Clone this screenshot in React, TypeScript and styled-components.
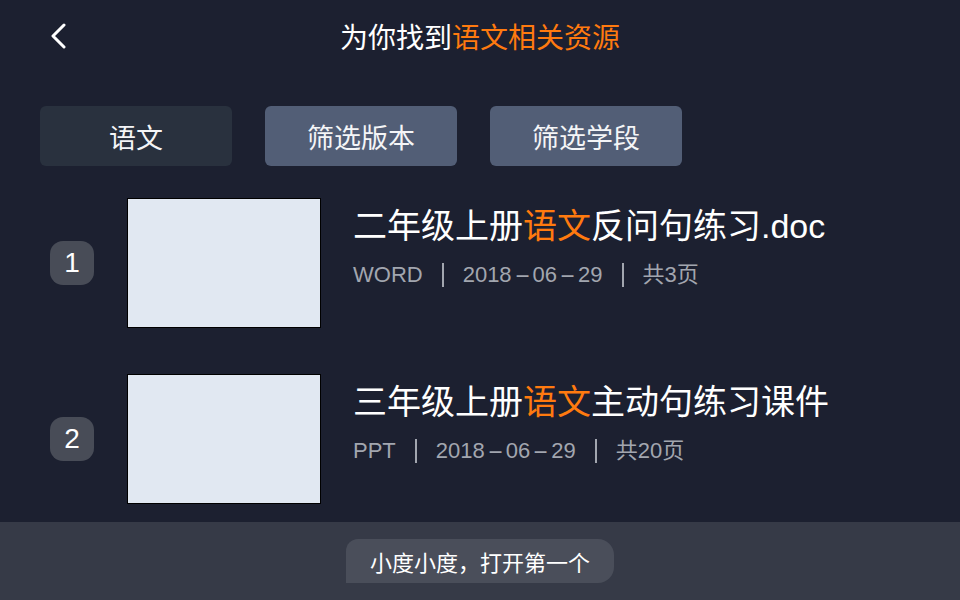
import styled, { createGlobalStyle } from "styled-components";

const GlobalStyle = createGlobalStyle`
    html, body {
        margin: 0;
        padding: 0;
        background-color: #1c2030;
    }
    * {
        box-sizing: border-box;
    }
`;

const Page = styled.div`
    width: 960px;
    height: 600px;
    display: flex;
    flex-direction: column;
    background-color: #1c2030;
    color: #ffffff;
    font-family: "Liberation Sans", "Noto Sans CJK SC", sans-serif;
    overflow: hidden;
`;

const Header = styled.div`
    height: 75px;
    display: grid;
    grid-template-columns: 1fr auto 1fr;
    align-items: center;
    padding: 0 50px 4px;
`;

const BackButton = styled.button`
    width: 20px;
    height: 28px;
    padding: 0;
    border: 0;
    background: none;
    display: flex;
    align-items: center;
    cursor: pointer;
`;

const Title = styled.h1`
    margin: 0;
    font-size: 28px;
    font-weight: 400;
    line-height: 1;
    color: #ffffff;
    font-family: "Noto Sans CJK SC", sans-serif;
`;

const Highlight = styled.span`
    color: #ff7a0f;
`;

const FilterRow = styled.div`
    display: flex;
    gap: 33px;
    padding: 31px 0 0 40px;
`;

const FilterButton = styled.button<{ $active?: boolean }>`
    width: 192px;
    height: 60px;
    border: 0;
    border-radius: 6px;
    background-color: ${(p) => (p.$active ? "#29313e" : "#525e76")};
    color: #f4f5f7;
    font-size: 27px;
    font-family: "Noto Sans CJK SC", sans-serif;
    cursor: pointer;
`;

const List = styled.div`
    flex: 1;
    display: flex;
    flex-direction: column;
    gap: 46px;
    padding-top: 32px;
`;

const Row = styled.div`
    display: flex;
    align-items: flex-start;
    height: 130px;
`;

const Badge = styled.div`
    width: 44px;
    height: 44px;
    margin: 43px 33px 0 50px;
    border-radius: 13px;
    background-color: #484c57;
    display: flex;
    align-items: center;
    justify-content: center;
    font-size: 28px;
    color: #ffffff;
`;

const Thumb = styled.div`
    width: 194px;
    height: 130px;
    border: 1px solid #000000;
    background-color: #e1e8f2;
`;

const Info = styled.div`
    display: flex;
    flex-direction: column;
    padding: 6px 0 0 32px;
`;

const DocTitle = styled.div`
    font-size: 34px;
    line-height: 44px;
    color: #ffffff;
    white-space: nowrap;
`;

const Meta = styled.div`
    display: flex;
    align-items: center;
    margin-top: 12px;
    font-size: 22px;
    line-height: 30px;
    color: #a2a6af;
`;

const Dash = styled.span`
    display: inline-block;
    width: 21px;
    text-align: center;
    transform: scaleX(2.2);
`;

const Separator = styled.span`
    width: 2px;
    height: 24px;
    margin: 0 19px;
    background-color: #a2a6af;
`;

const Footer = styled.div`
    height: 78px;
    background-color: #363a47;
    display: flex;
    align-items: center;
    justify-content: center;
`;

const Hint = styled.div`
    height: 44px;
    padding: 0 24px;
    border-radius: 12px 16px 16px 0;
    background-color: #4a4e5a;
    display: flex;
    align-items: center;
    font-size: 22px;
    color: #ffffff;
    font-family: "Noto Sans CJK SC", sans-serif;
`;

interface IResource {
    before: string;
    after: string;
    type: string;
    date: string;
    pages: number;
}

const resources: IResource[] = [
    { before: "二年级上册", after: "反问句练习.doc", type: "WORD", date: "2018-06-29", pages: 3 },
    { before: "三年级上册", after: "主动句练习课件", type: "PPT", date: "2018-06-29", pages: 20 },
];

// 날짜의 하이픈을 넓게 보이도록 따로 감싼다
function DateText({ value }: { value: string }) {
    const parts = value.split("-");
    return (
        <span>
            {parts.map((p, i) => (
                <span key={i}>
                    {i > 0 ? <Dash>-</Dash> : null}
                    {p}
                </span>
            ))}
        </span>
    );
}

export default function App() {
    return (
        <>
            <GlobalStyle />
            <Page>
                <Header>
                    <BackButton>
                        <svg width="16" height="26" viewBox="0 0 16 26">
                            <path d="M14 2 L3 13 L14 24" fill="none" stroke="#ffffff" strokeWidth="3" strokeLinecap="round" strokeLinejoin="round" />
                        </svg>
                    </BackButton>
                    <Title>
                        为你找到<Highlight>语文相关资源</Highlight>
                    </Title>
                    <div />
                </Header>
                <FilterRow>
                    <FilterButton $active>语文</FilterButton>
                    <FilterButton>筛选版本</FilterButton>
                    <FilterButton>筛选学段</FilterButton>
                </FilterRow>
                <List>
                    {resources.map((r, i) => (
                        <Row key={i}>
                            <Badge>{i + 1}</Badge>
                            <Thumb />
                            <Info>
                                <DocTitle>
                                    {r.before}
                                    <Highlight>语文</Highlight>
                                    {r.after}
                                </DocTitle>
                                <Meta>
                                    <span>{r.type}</span>
                                    <Separator />
                                    <DateText value={r.date} />
                                    <Separator />
                                    <span>共{r.pages}页</span>
                                </Meta>
                            </Info>
                        </Row>
                    ))}
                </List>
                <Footer>
                    <Hint>小度小度，打开第一个</Hint>
                </Footer>
            </Page>
        </>
    );
}
